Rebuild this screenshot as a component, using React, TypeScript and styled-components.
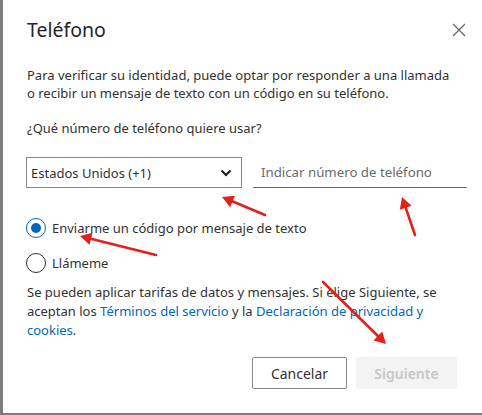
import styled, { createGlobalStyle } from "styled-components"

const Global = createGlobalStyle`
  html, body {
    margin: 0;
    padding: 0;
    background: #ffffff;
  }
  * {
    box-sizing: border-box;
  }
`

const Dialog = styled.div`
  position: relative;
  width: 482px;
  height: 415px;
  background: #fff;
  border-left: 3px solid #7d7d7d;
  border-bottom: 2px solid #7d7d7d;
  padding: 16px 15px 0 24px;
  font-family: "Noto Sans", "Open Sans", sans-serif;
  color: #323130;
  font-size: 13px;
`

const Header = styled.div`
  display: flex;
  justify-content: space-between;
  align-items: center;
`

const Title = styled.h1`
  margin: 0;
  font-size: 19.5px;
  font-weight: 400;
  line-height: 28px;
  color: #252423;
`

const CloseButton = styled.button`
  border: none;
  background: none;
  padding: 0;
  width: 16px;
  height: 16px;
  display: flex;
  align-items: center;
  justify-content: center;
  cursor: pointer;
`

const Text = styled.p<{ $top?: number; $lh?: number }>`
  margin: ${(p) => p.$top ?? 0}px 0 0 0;
  max-width: 428px;
  line-height: ${(p) => p.$lh ?? 18}px;
`

const FieldRow = styled.div`
  display: flex;
  gap: 11px;
  margin-top: 20px;
  margin-left: -1px;
`

const SelectBox = styled.div`
  width: 216px;
  height: 31px;
  border: 1px solid #8a8886;
  display: flex;
  align-items: center;
  justify-content: space-between;
  padding: 0 9px 0 4px;
`

const PhoneInput = styled.input`
  flex: 1;
  border: none;
  border-bottom: 1px solid #666;
  height: 31px;
  padding: 0 8px;
  font-family: inherit;
  font-size: 13.25px;
  color: #323130;
  outline: none;
  &::placeholder {
    color: #6b6b6b;
  }
`

const Options = styled.div`
  display: flex;
  flex-direction: column;
  gap: 15px;
  margin-top: 30px;
  margin-left: -1px;
`

const Option = styled.label`
  display: flex;
  align-items: center;
  gap: 6px;
  line-height: 20px;
`

const Radio = styled.span<{ $checked?: boolean }>`
  width: 20px;
  height: 20px;
  border-radius: 50%;
  border: 1px solid ${(p) => (p.$checked ? "#0067b8" : "#323130")};
  display: flex;
  align-items: center;
  justify-content: center;
  &::after {
    content: "";
    width: 10px;
    height: 10px;
    border-radius: 50%;
    background: #0067b8;
    display: ${(p) => (p.$checked ? "block" : "none")};
  }
`

const Link = styled.a`
  color: #0067b8;
  text-decoration: none;
`

const Actions = styled.div`
  display: flex;
  justify-content: flex-end;
  gap: 9px;
  margin-top: 17px;
  padding-right: 10px;
`

const Button = styled.button<{ $disabled?: boolean; $w: number }>`
  height: 32px;
  width: ${(p) => p.$w}px;
  padding: 0;
  font-family: inherit;
  font-size: 14px;
  font-weight: ${(p) => (p.$disabled ? 600 : 400)};
  border: 1px solid ${(p) => (p.$disabled ? "#f3f3f3" : "#8a8886")};
  background: ${(p) => (p.$disabled ? "#f3f3f3" : "#fff")};
  color: ${(p) => (p.$disabled ? "#c8c6c4" : "#323130")};
  border-radius: 2px;
`

const Annotations = styled.svg`
  position: absolute;
  left: 0;
  top: 0;
  pointer-events: none;
`

const arrows = [
  { x1: 262, y1: 215, x2: 219, y2: 197 },
  { x1: 412, y1: 235, x2: 399, y2: 197 },
  { x1: 153, y1: 255, x2: 77, y2: 236 },
  { x1: 320, y1: 282, x2: 383, y2: 344 },
]

function Arrow({ x1, y1, x2, y2 }: { x1: number; y1: number; x2: number; y2: number }) {
  const a = Math.atan2(y2 - y1, x2 - x1)
  const len = 13
  const w = 0.5
  const p1 = `${x2 - len * Math.cos(a - w)},${y2 - len * Math.sin(a - w)}`
  const p2 = `${x2 - len * Math.cos(a + w)},${y2 - len * Math.sin(a + w)}`
  return (
    <g>
      <line x1={x1} y1={y1} x2={x2 - 6 * Math.cos(a)} y2={y2 - 6 * Math.sin(a)} stroke="#e3211c" strokeWidth={2.6} strokeLinecap="round" />
      <polygon points={`${x2},${y2} ${p1} ${p2}`} fill="#e3211c" />
    </g>
  )
}

export default function App() {
  return (
    <>
      <Global />
      <Dialog>
        <Header>
          <Title>Teléfono</Title>
          <CloseButton aria-label="Cerrar">
            <svg width="14" height="14" viewBox="0 0 14 14">
              <path d="M1 1L13 13M13 1L1 13" stroke="#605e5c" strokeWidth="1.1" />
            </svg>
          </CloseButton>
        </Header>
        <Text $top={22}>
          Para verificar su identidad, puede optar por responder a una llamada o recibir un mensaje de texto con un código en su teléfono.
        </Text>
        <Text $top={17}>¿Qué número de teléfono quiere usar?</Text>
        <FieldRow>
          <SelectBox>
            <span>Estados Unidos (+1)</span>
            <svg width="12" height="8" viewBox="0 0 12 8">
              <path d="M1.5 1.5L6 6L10.5 1.5" stroke="#1b1a19" strokeWidth="2" fill="none" />
            </svg>
          </SelectBox>
          <PhoneInput placeholder="Indicar número de teléfono" />
        </FieldRow>
        <Options>
          <Option>
            <Radio $checked />
            <span>Enviarme un código por mensaje de texto</span>
          </Option>
          <Option>
            <Radio />
            <span>Llámeme</span>
          </Option>
        </Options>
        <Text $top={10} $lh={19}>
          Se pueden aplicar tarifas de datos y mensajes. Si elige Siguiente, se aceptan los{" "}
          <Link href="#">Términos del servicio</Link> y la <Link href="#">Declaración de privacidad y cookies</Link>.
        </Text>
        <Actions>
          <Button $w={95}>Cancelar</Button>
          <Button $w={101} $disabled>
            Siguiente
          </Button>
        </Actions>
        <Annotations width="482" height="415">
          {arrows.map((a, i) => (
            <Arrow key={i} {...a} />
          ))}
        </Annotations>
      </Dialog>
    </>
  )
}
